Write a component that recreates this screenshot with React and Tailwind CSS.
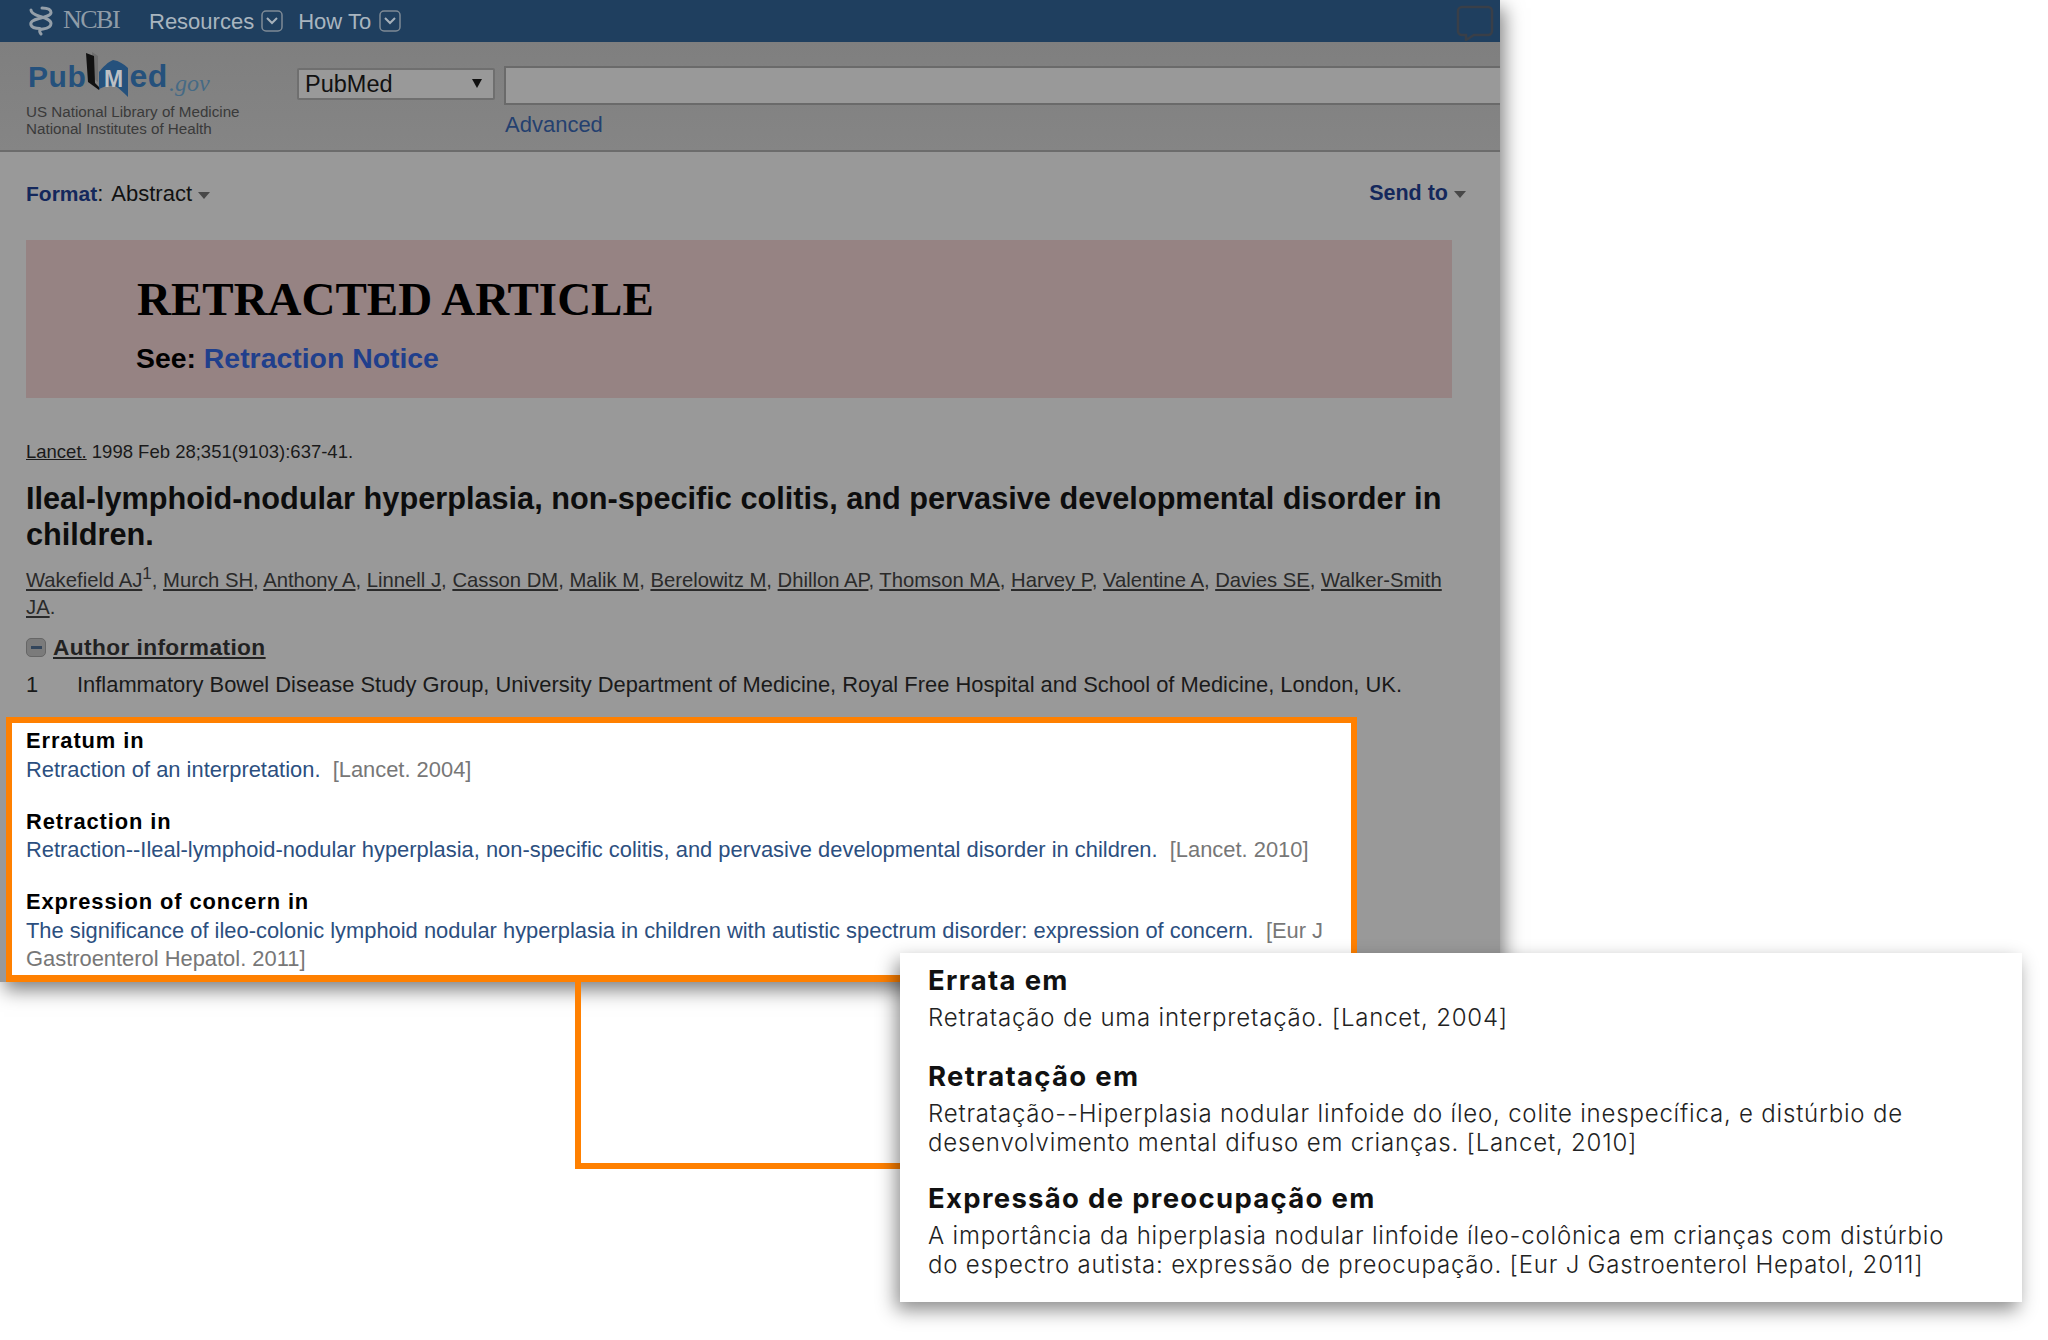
import React from "react";

const AUTHORS = [
  "Murch SH", "Anthony A", "Linnell J", "Casson DM", "Malik M", "Berelowitz M", "Dhillon AP",
  "Thomson MA", "Harvey P", "Valentine A", "Davies SE", "Walker-Smith JA",
];

function HelixIcon() {
  return (
    <svg width="26" height="30" viewBox="0 0 26 30" fill="none" stroke="#949fa9" strokeWidth="3" strokeLinecap="round">
      <path d="M14 2c5 0 9 1.500 9 4.500S17 11 11 12.500 2 16 3 19s5 3.500 9 3.500" />
      <path d="M3 4c0 3.500 4 5 9 6.500s11 3 11 7-4 5-8 5.500-4 2.500-2 5" />
    </svg>
  );
}

function ChevronBox() {
  return (
    <svg width="22" height="22" viewBox="0 0 22 22" fill="none">
      <rect x="1" y="1" width="20" height="20" rx="4" stroke="#7f8b96" strokeWidth="1.500" />
      <path d="M6 8l5 5 5-5" stroke="#a5b0ba" strokeWidth="2" />
    </svg>
  );
}

function Caret({ className = "" }) {
  return <span className={`inline-block w-0 h-0 border-x-[6px] border-x-transparent border-t-[7px] border-t-[#484848] ${className}`} />;
}

function PubMedLogo() {
  return (
    <div className="ml-[2px] flex items-end h-[46px] leading-none">
      <span className="text-[30px] font-bold text-[#25517c] tracking-[0.6px] pb-[6px]">Pub</span>
      <svg width="43" height="46" viewBox="0 0 43 46" className="shrink-0">
        <path d="M6 0l6 4v26l-5-4z" fill="#6f6f6f" />
        <path d="M0 1l8 3 1 27 5 5-1 2-11-8z" fill="#111" />
        <path d="M13 20c4-5 9-10 14-12 6 1 11 4 15 8v29c-5-5-9-9-13-11-5-1-11 0-16 3z" fill="#25517c" />
        <text x="27.500" y="35" textAnchor="middle" fontSize="23" fontWeight="700" fill="#bcc0c4" fontFamily="Liberation Sans, sans-serif">M</text>
      </svg>
      <span className="text-[32px] font-bold text-[#25517c] tracking-[0.6px] pb-[6px]">ed</span>
      <span className="text-[24px] italic text-[#466a85] [font-family:'Liberation_Serif',serif] pb-[3px] ml-[1px]">.gov</span>
    </div>
  );
}

function RefBlock({ title, className = "", children }) {
  return (
    <div className={className}>
      <div className="font-bold text-black tracking-[0.9px]">{title}</div>
      <div>{children}</div>
    </div>
  );
}

function TranslationBlock({ title, className = "", lines }) {
  return (
    <div className={className}>
      <div className="text-[27.500px] leading-[34px] font-bold text-[#111] tracking-[1.300px]">{title}</div>
      <div className="mt-[6px] text-[24px] leading-[29px] font-light text-[#222] tracking-[0.8px] whitespace-nowrap">
        {lines.map((l) => <div key={l}>{l}</div>)}
      </div>
    </div>
  );
}

export default function App() {
  return (
    <div className="relative w-[2048px] h-[1340px] overflow-hidden bg-white [font-family:'Liberation_Sans',Arial,sans-serif]">
      <div className="w-[1500px] h-[982px] bg-[#999999] shadow-[4px_8px_18px_rgba(0,0,0,0.5)]">
        {/* ncbi bar */}
        <div className="h-[42px] bg-[#1f3f5f] flex items-center pl-[28px] pr-[6px]">
          <HelixIcon />
          <span className="ml-[9px] mb-[3px] w-[57px] text-[26px] [font-family:'Liberation_Serif',serif] text-[#8f9ca8] tracking-[-1.500px]">NCBI</span>
          <span className="ml-[29px] text-[22px] text-[#a9b5bf]">Resources</span>
          <span className="ml-[7px]"><ChevronBox /></span>
          <span className="ml-[15px] text-[22px] text-[#a9b5bf]">How To</span>
          <span className="ml-[8px]"><ChevronBox /></span>
          <svg width="38" height="36" viewBox="0 0 38 36" fill="none" className="ml-auto mt-[4px]">
            <path d="M6 2h26a4 4 0 0 1 4 4v20a4 4 0 0 1-4 4H18l-8 5v-5H6a4 4 0 0 1-4-4V6a4 4 0 0 1 4-4z" stroke="#393f48" strokeWidth="2.500" />
          </svg>
        </div>

        {/* search band */}
        <div className="h-[110px] bg-gradient-to-b from-[#7f7f7f] to-[#858585] border-b-2 border-b-[#6c6c6c] flex relative">
          <div className="w-[297px] pl-[26px] pt-[10px] shrink-0">
            <PubMedLogo />
            <div className="mt-[5px] text-[15.200px] leading-[17px] whitespace-nowrap text-[#3a3a3a]">
              US National Library of Medicine<br />National Institutes of Health
            </div>
          </div>
          <div className="w-[198px] h-[32px] mt-[26px] shrink-0 rounded-[2px] border-2 border-[#6f6f6f] bg-[#999999] flex items-center justify-between pl-[6px] pr-[11px] pt-[2px] text-[23.500px] text-[#111]">
            PubMed
            <span className="w-0 h-0 mb-[3px] border-x-[5px] border-x-transparent border-t-[9px] border-t-[#111]" />
          </div>
          <div className="ml-[9px] flex-1 min-w-0">
            <div className="mt-[24px] h-[39px] border-y-2 border-l-2 border-[#6a6a6a] bg-[#999999]" />
            <div className="mt-[7px] ml-[1px] text-[22px] leading-[26px] text-[#24406f]">Advanced</div>
          </div>
        </div>

        {/* format / send to */}
        <div className="h-[88px] pb-[5px] flex items-center justify-between pl-[26px] pr-[34px] text-[22px]">
          <div className="text-[#111]">
            <b className="text-[21px] text-[#14285c]">Format</b>:<span className="ml-[8px]">Abstract</span>
            <Caret className="ml-[6px] align-middle" />
          </div>
          <div className="text-[21.500px] font-bold text-[#14285c]">
            Send to
            <Caret className="ml-[6px] align-middle" />
          </div>
        </div>

        {/* retracted banner */}
        <div className="ml-[26px] w-[1426px] h-[158px] bg-[#968383] pl-[110px] pt-[34px]">
          <div className="ml-[1px] text-[47px] leading-[50px] font-bold text-black [font-family:'Liberation_Serif',serif]">RETRACTED ARTICLE</div>
          <div className="mt-[17px] text-[28.400px] leading-[35px] font-bold text-black">
            See: <span className="text-[#203f8c]">Retraction Notice</span>
          </div>
        </div>

        {/* citation */}
        <div className="px-[26px] text-[#1a1a1a]">
          <div className="mt-[43px] text-[18.500px] leading-[22px]"><u>Lancet.</u> 1998 Feb 28;351(9103):637-41.</div>
          <h1 className="mt-[18px] text-[30.700px] leading-[36px] font-bold text-[#0d0d0d]">
            Ileal-lymphoid-nodular hyperplasia, non-specific colitis, and pervasive developmental disorder in children.
          </h1>
          <div className="mt-[14px] text-[20.250px] leading-[27px] w-[1430px] text-[#2a2a2a]">
            <u>Wakefield AJ</u><sup className="text-[17px]">1</sup>
            {AUTHORS.map((a, i) => (
              <span key={a}>, <u>{a}</u>{i === AUTHORS.length - 1 ? "." : ""}</span>
            ))}
          </div>
          <div className="mt-[12px] flex items-center text-[22.700px] leading-[28px] font-bold text-[#222] tracking-[0.4px]">
            <span className="w-[20px] h-[19px] rounded-[5px] bg-[#7b7b7b] border border-[#666] flex items-center justify-center mr-[7px]">
              <span className="w-[11px] h-[3px] bg-[#33465c]" />
            </span>
            <u>Author information</u>
          </div>
          <div className="mt-[11px] flex text-[21.900px] leading-[26px] whitespace-nowrap">
            <span className="w-[51px]">1</span>
            <span>Inflammatory Bowel Disease Study Group, University Department of Medicine, Royal Free Hospital and School of Medicine, London, UK.</span>
          </div>
        </div>

        {/* highlighted box */}
        <div className="mt-[19px] ml-[6px] w-[1351px] h-[265px] bg-white border-[#ff8000] border-x-[6px] border-t-[6px] border-b-[7px] pl-[14px] pr-[20px] pt-[4px] text-[21.900px] leading-[28.500px] text-[#777777]">
          <RefBlock title="Erratum in">
            <span className="text-[#2c4f7f]">Retraction of an interpretation.</span>&nbsp; [Lancet. 2004]
          </RefBlock>
          <RefBlock title="Retraction in" className="mt-[23.500px]">
            <span className="text-[#2c4f7f]">Retraction--Ileal-lymphoid-nodular hyperplasia, non-specific colitis, and pervasive developmental disorder in children.</span>&nbsp; [Lancet. 2010]
          </RefBlock>
          <RefBlock title="Expression of concern in" className="mt-[23.500px]">
            <span className="text-[#2c4f7f]">The significance of ileo-colonic lymphoid nodular hyperplasia in children with autistic spectrum disorder: expression of concern.</span>&nbsp; [Eur J Gastroenterol Hepatol. 2011]
          </RefBlock>
        </div>
      </div>

      {/* connector between the box and the translation card */}
      <div className="absolute left-[575px] top-[982px] w-[330px] h-[187px] border-l-[6px] border-b-[6px] border-[#ff8000]" />

      {/* translation card */}
      <div className="absolute left-[900px] top-[953px] w-[1122px] h-[349px] bg-white pl-[28px] pt-[10px] shadow-[-4px_8px_18px_rgba(0,0,0,0.45)] [font-family:Inter,sans-serif]">
        <TranslationBlock title="Errata em" lines={["Retratação de uma interpretação. [Lancet, 2004]"]} />
        <TranslationBlock
          title="Retratação em"
          className="mt-[27px]"
          lines={[
            "Retratação--Hiperplasia nodular linfoide do íleo, colite inespecífica, e distúrbio de",
            "desenvolvimento mental difuso em crianças. [Lancet, 2010]",
          ]}
        />
        <TranslationBlock
          title="Expressão de preocupação em"
          className="mt-[24px]"
          lines={[
            "A importância da hiperplasia nodular linfoide íleo-colônica em crianças com distúrbio",
            "do espectro autista: expressão de preocupação. [Eur J Gastroenterol Hepatol, 2011]",
          ]}
        />
      </div>
    </div>
  );
}
